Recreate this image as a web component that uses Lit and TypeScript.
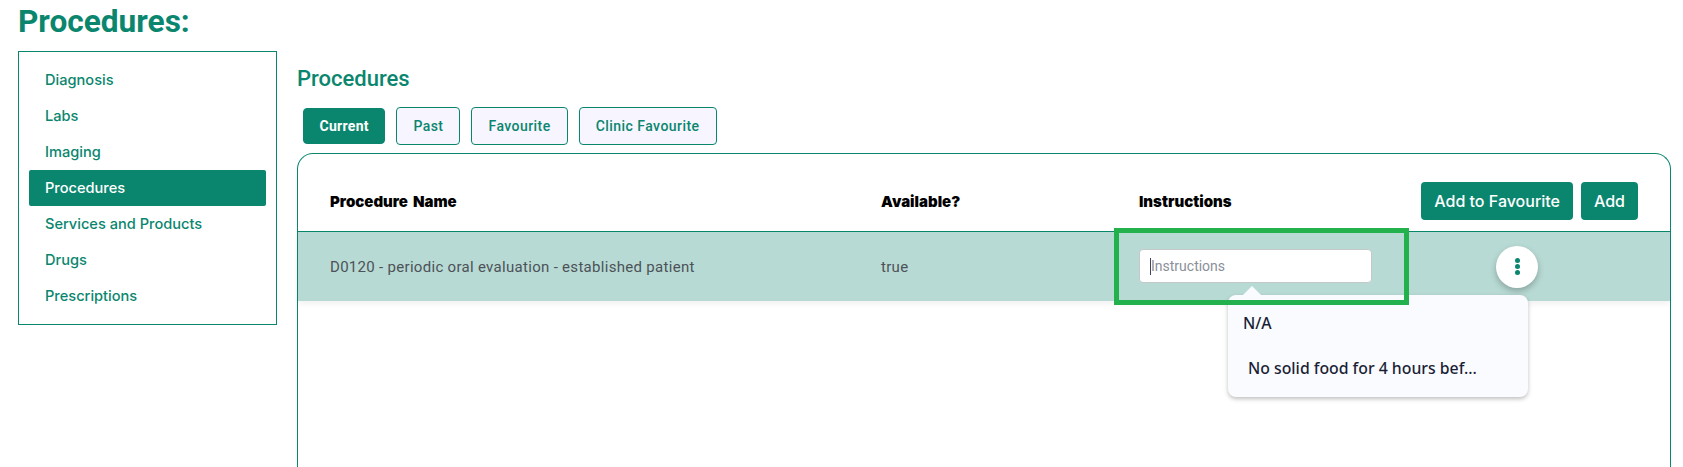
import { LitElement, html, css } from "lit";
import { customElement } from "lit/decorators.js";

const NAV = ["Diagnosis", "Labs", "Imaging", "Procedures", "Services and Products", "Drugs", "Prescriptions"];
const TABS = ["Current", "Past", "Favourite", "Clinic Favourite"];

@customElement("app-root")
export class AppRoot extends LitElement {
  static styles = css`
    :host { display: block; height: 467px; overflow: hidden; background: #fff; font-family: Roboto, sans-serif; color: #0a866e; }
    * { box-sizing: border-box; }
    .title { margin: 0; padding: 4px 0 0 18px; height: 51px; font: 700 31.6px/36px Roboto, sans-serif; color: #0a866e; }
    .layout { display: grid; grid-template-columns: 259px 1fr; column-gap: 20px; padding: 0 12px 0 18px; }
    .nav { height: 274px; border: 1px solid #0a866e; padding: 10px 10px 0 10px; display: flex; flex-direction: column; }
    .nav a { display: flex; align-items: center; height: 36px; padding-left: 16px; font: 500 14.6px Inter, sans-serif; color: #0a866e; border-radius: 2px; }
    .nav a.on { background: #0a866e; color: #fff; }
    .heading { margin: 0; padding-top: 16px; height: 56px; font: 500 22px/24px Roboto, sans-serif; color: #0a866e; }
    .tabs { display: flex; align-items: center; gap: 11px; padding-left: 6px; height: 38px; margin-bottom: 8px; }
    .tab { height: 38px; display: flex; align-items: center; padding: 0 16px 1px; border: 1px solid #0a866e; border-radius: 4px; background: #f7f5ff; font: 500 14px Roboto, sans-serif; letter-spacing: 0.45px; color: #0a866e; }
    .tab.on { height: 36px; padding: 0 15.5px 1px; background: #0a866e; color: #fff; font-weight: 700; letter-spacing: 0.3px; }
    .card { position: relative; height: 400px; border: 1px solid #0a866e; border-bottom: 0; border-radius: 16px 16px 0 0; }
    .grid { display: grid; grid-template-columns: 551px 258px 240px 1fr; padding-left: 32px; align-items: center; }
    .head { height: 78px; padding-top: 17px; border-bottom: 1px solid #0a866e; font: 900 15px Inter, sans-serif; word-spacing: 2px; color: #000; }
    .row { height: 69px; background: #b8dad4; font: 400 15px Roboto, sans-serif; letter-spacing: 0.3px; color: #4c5258; box-shadow: 0 3px 6px rgba(0,0,0,.06); }
    .actions { display: flex; gap: 8px; justify-content: flex-end; padding-right: 32px; word-spacing: 0; }
    .btn { height: 38px; display: flex; align-items: center; padding: 0 13px; background: #0a866e; color: #fff; border-radius: 4px; font: 500 16px Inter, sans-serif; }
    .input { width: 233px; height: 34px; margin-bottom: 1px; background: #fff; border: 1px solid #c4c8c8; border-radius: 4px; display: flex; align-items: center; padding-left: 10px; font: 400 14px Roboto, sans-serif; letter-spacing: 0; color: #8a9099; }
    .caret { width: 1px; height: 17px; background: #3d4560; }
    .more-cell { display: flex; padding-left: 117px; }
    .more { width: 42px; height: 42px; border-radius: 50%; background: #fff; box-shadow: 0 3px 6px rgba(0,0,0,.25); display: flex; flex-direction: column; align-items: center; justify-content: center; gap: 1px; }
    .more i { width: 5px; height: 5px; border-radius: 50%; background: #0a866e; }
    .pop { position: absolute; left: 930px; top: 141px; width: 300px; height: 102px; background: #fafbff; border-radius: 8px; box-shadow: 0 2px 4px rgba(0,0,0,.25); font: 500 15.8px "Noto Sans", sans-serif; color: #1a1f36; z-index: 2; }
    .pop::before { content: ""; position: absolute; left: 15px; top: -9px; width: 0; height: 0; border: 9px solid transparent; border-top: 0; border-bottom-color: #fafbff; }
    .pop div { position: absolute; white-space: nowrap; }
    .pop .a { left: 15px; top: 17px; }
    .pop .b { left: 20px; top: 62px; }
    .mark { position: absolute; left: 816px; top: 74px; width: 295px; height: 77px; border: 5px solid #22b14c; z-index: 3; }
  `;

  render() {
    return html`
      <h1 class="title">Procedures:</h1>
      <div class="layout">
        <nav class="nav">
          ${NAV.map((n) => html`<a class=${n === "Procedures" ? "on" : ""}>${n}</a>`)}
        </nav>
        <main>
          <h2 class="heading">Procedures</h2>
          <div class="tabs">
            ${TABS.map((t, i) => html`<div class="tab ${i === 0 ? "on" : ""}">${t}</div>`)}
          </div>
          <section class="card">
            <div class="grid head">
              <div>Procedure Name</div>
              <div>Available?</div>
              <div>Instructions</div>
              <div class="actions"><div class="btn">Add to Favourite</div><div class="btn">Add</div></div>
            </div>
            <div class="grid row">
              <div>D0120 - periodic oral evaluation - established patient</div>
              <div>true</div>
              <div><div class="input"><span class="caret"></span>Instructions</div></div>
              <div class="more-cell"><div class="more"><i></i><i></i><i></i></div></div>
            </div>
            <div class="pop"><div class="a">N/A</div><div class="b">No solid food for 4 hours bef...</div></div>
            <div class="mark"></div>
          </section>
        </main>
      </div>
    `;
  }
}
